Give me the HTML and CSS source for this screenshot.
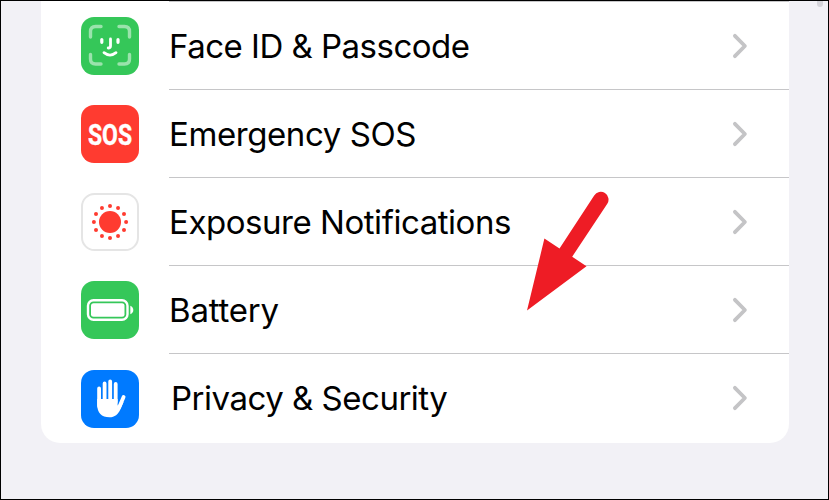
FILE: index.html
```html
<!DOCTYPE html>
<html lang="en">
<head>
<meta charset="utf-8">
<title>Settings</title>
<link rel="stylesheet" href="styles.css">
</head>
<body>
<main class="screen">
  <ul class="card">
    <li class="row">
      <svg class="icon" viewBox="0 0 58 58">
        <rect width="58" height="58" rx="13" fill="#35c759"/>
        <path d="M9.500 20v-5.500q0-5 5-5H20M38 9.500h5.500q5 0 5 5V20M48.500 37.500V42q0 5-5 5H38M20 47h-5.500q-5 0-5-5v-4.500" fill="none" stroke="#9ae3ac" stroke-width="3.400" stroke-linecap="round"/>
        <path d="M20.800 22.500v2.800M37 22.500v2.800" fill="none" stroke="#fff" stroke-width="3.200" stroke-linecap="round"/>
        <path d="M29.500 22v7q0 2-2.300 2M23 35.700q6 4.800 12 0" fill="none" stroke="#fff" stroke-width="2.800" stroke-linecap="round"/>
      </svg>
      <div class="content"><span class="label face">Face ID &amp; Passcode</span><svg class="chevron" viewBox="0 0 16 26"><path d="M2.900 2.800 12.900 13 2.900 23.200"/></svg></div>
    </li>
    <li class="row">
      <svg class="icon" viewBox="0 0 58 58">
        <rect width="58" height="58" rx="13" fill="#ff3b30"/>
        <text class="sos" x="29" y="39.800" text-anchor="middle" textLength="44" lengthAdjust="spacingAndGlyphs">SOS</text>
      </svg>
      <div class="content"><span class="label emergency">Emergency SOS</span><svg class="chevron" viewBox="0 0 16 26"><path d="M2.900 2.800 12.900 13 2.900 23.200"/></svg></div>
    </li>
    <li class="row">
      <svg class="icon" viewBox="0 0 58 58">
        <rect x="1" y="1" width="56" height="56" rx="12.500" fill="#fff" stroke="#e5e5e5" stroke-width="2"/>
        <g fill="#ff3b30">
          <circle cx="29" cy="29" r="11"/>
          <circle cx="29" cy="12.900" r="2"/><circle cx="37.050" cy="15" r="2"/><circle cx="43" cy="20.950" r="2"/>
          <circle cx="45.100" cy="29" r="2"/><circle cx="43" cy="37.050" r="2"/><circle cx="37.050" cy="43" r="2"/>
          <circle cx="29" cy="45.100" r="2"/><circle cx="20.950" cy="43" r="2"/><circle cx="15" cy="37.050" r="2"/>
          <circle cx="12.900" cy="29" r="2"/><circle cx="15" cy="20.950" r="2"/><circle cx="20.950" cy="15" r="2"/>
        </g>
      </svg>
      <div class="content"><span class="label exposure">Exposure Notifications</span><svg class="chevron" viewBox="0 0 16 26"><path d="M2.900 2.800 12.900 13 2.900 23.200"/></svg></div>
    </li>
    <li class="row">
      <svg class="icon" viewBox="0 0 58 58">
        <rect width="58" height="58" rx="13" fill="#35c759"/>
        <rect x="7" y="19.200" width="39.500" height="19.600" rx="5.500" fill="none" stroke="#fff" stroke-width="2.400"/>
        <rect x="10" y="22.200" width="33.500" height="13.600" rx="2.500" fill="#fff"/>
        <path d="M49.300 24.700q3 1.300 3 4.300t-3 4.300z" fill="#fff"/>
      </svg>
      <div class="content"><span class="label battery">Battery</span><svg class="chevron" viewBox="0 0 16 26"><path d="M2.900 2.800 12.900 13 2.900 23.200"/></svg></div>
    </li>
    <li class="row last">
      <svg class="icon" viewBox="0 0 58 58">
        <rect width="58" height="58" rx="13" fill="#007aff"/>
        <g fill="none" stroke="#fff" stroke-width="3.800" stroke-linecap="round">
          <path d="M18.100 18.500V36M23.600 13.500V32M29.200 11.500V32M34.700 14V32M42.600 27l-4.500 10.500"/>
        </g>
        <path d="M16.200 29h20.400v5.500q0 1.500 1 .5l2.300-4 2.600 1.200-3 6.800C37.300 44.500 33.700 47.300 28.500 47.300c-8 0-12.300-4.500-12.300-12.800z" fill="#fff"/>
      </svg>
      <div class="content"><span class="label privacy">Privacy &amp; Security</span><svg class="chevron" viewBox="0 0 16 26"><path d="M2.900 2.800 12.900 13 2.900 23.200"/></svg></div>
    </li>
  </ul>
  <div class="scrollbar"></div>
  <svg class="arrow" viewBox="0 0 84 121">
    <path d="M67.200 5.400A7.300 7.300 0 0 1 80.300 13.800L45.200 66.700 59.500 76.300 0 120.500 17.400 48.600 32.500 58.500Z" fill="#ee1c25"/>
  </svg>
</main>
</body>
</html>
```
FILE: styles.css
```css
* { box-sizing: border-box; }
body { margin: 0; }
.screen {
  position: relative;
  width: 829px;
  height: 500px;
  padding: 0 39px 0 40px;
  border: 1px solid #000;
  background: #f2f1f6;
  overflow: hidden;
  font-family: Inter, "Liberation Sans", sans-serif;
}
.card {
  width: 748px;
  height: 442px;
  margin: 0;
  padding: 1px 0 0;
  list-style: none;
  border-radius: 0 0 19px 19px;
  background: #fff linear-gradient(#c6c6c8, #c6c6c8) right top / 620px 1px no-repeat;
}
.row {
  display: flex;
  height: 88px;
  padding-left: 40px;
}
.icon {
  flex: none;
  width: 58px;
  height: 58px;
  margin: 15px 30px 0 0;
  overflow: visible;
}
.last .icon { margin-top: 16px; }
.content {
  display: flex;
  flex: 1;
  align-items: flex-start;
  justify-content: space-between;
  padding-right: 41px;
  border-bottom: 1px solid #c6c6c8;
}
.last .content { border-bottom: 0; }
.label {
  padding-top: 24px;
  font-size: 33px;
  line-height: 40px;
  color: #000;
  white-space: nowrap;
}
.face { letter-spacing: -0.51px; }
.emergency { letter-spacing: -0.42px; }
.exposure { letter-spacing: -0.46px; }
.battery { letter-spacing: -0.2px; }
.privacy { letter-spacing: -0.49px; padding-left: 2px; }
.chevron {
  width: 16px;
  height: 26px;
  margin-top: 31px;
}
.chevron path {
  fill: none;
  stroke: #c4c4c6;
  stroke-width: 3.8;
  stroke-linecap: round;
  stroke-linejoin: round;
}
.sos {
  font-family: Roboto, sans-serif;
  font-size: 29px;
  font-weight: 700;
  fill: #fff;
  stroke: #fff;
  stroke-width: 0.4;
}
.scrollbar {
  position: absolute;
  top: 0;
  right: 5px;
  width: 6px;
  height: 6px;
  border-radius: 0 0 3px 3px;
  background: #d5d4da;
}
.arrow {
  position: absolute;
  left: 526px;
  top: 189px;
  width: 84px;
  height: 121px;
}
```
